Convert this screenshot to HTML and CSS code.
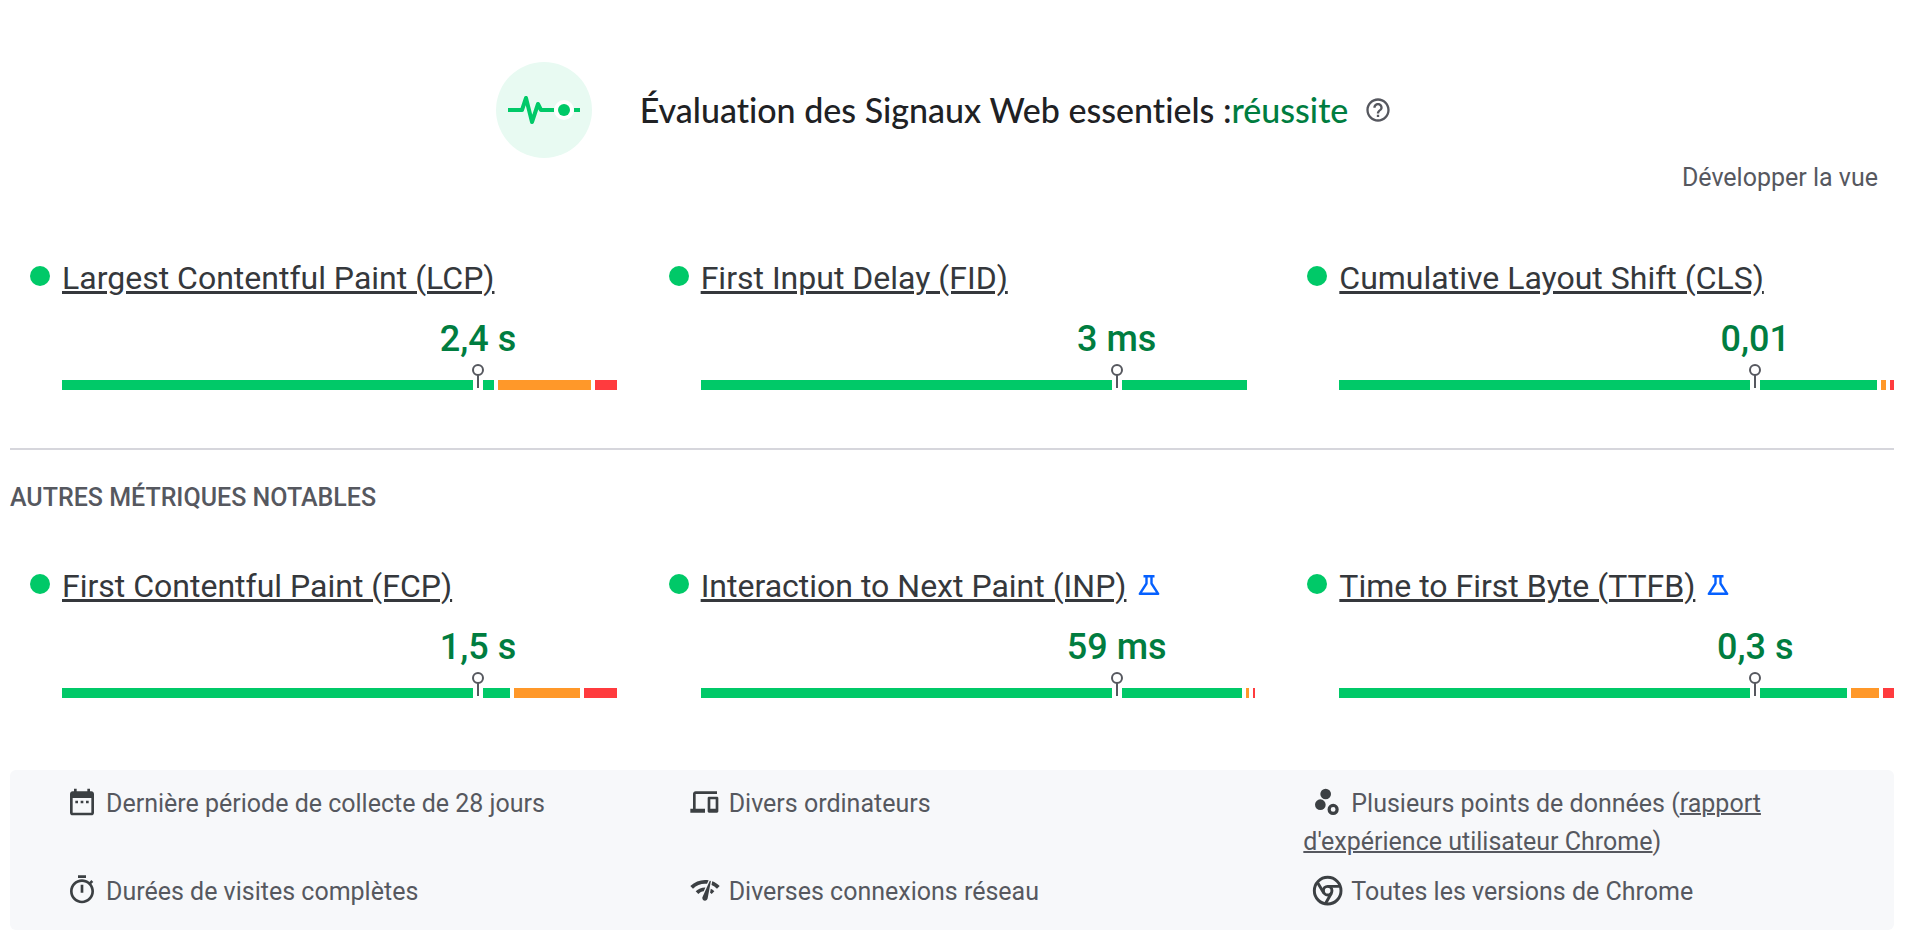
FILE: index.html
```html
<!DOCTYPE html>
<html lang="fr">
<head>
<meta charset="utf-8">
<meta name="viewport" content="width=device-width, initial-scale=1">
<title>Signaux Web essentiels</title>
<link rel="stylesheet" href="styles.css">
</head>
<body>
<main class="report">
  <header class="assessment">
    <svg class="assessment-icon" viewBox="0 0 96 96" aria-hidden="true">
      <circle cx="48" cy="48" r="48" fill="#e8faf2"/>
      <path d="M12 48h14l4-12 6 24 6-18 3 6h13" fill="none" stroke="#00c968" stroke-width="4" stroke-linejoin="round"/>
      <circle cx="68" cy="48" r="10" fill="#fff"/>
      <circle cx="68" cy="48" r="6" fill="#00c968"/>
      <path d="M78 48h6" stroke="#00c968" stroke-width="4"/>
    </svg>
    <h1 class="assessment-title">Évaluation des Signaux Web essentiels :<span class="passed">réussite</span></h1>
    <button class="help" type="button" aria-label="Aide">
      <svg viewBox="0 0 24 24" aria-hidden="true"><path fill="currentColor" d="M11 18h2v-2h-2v2zm1-16C6.480 2 2 6.480 2 12s4.480 10 10 10 10-4.480 10-10S17.520 2 12 2zm0 18c-4.410 0-8-3.590-8-8s3.590-8 8-8 8 3.590 8 8-3.590 8-8 8zm0-14c-2.210 0-4 1.790-4 4h2c0-1.100.9-2 2-2s2 .9 2 2c0 2-3 1.750-3 5h2c0-2.250 3-2.500 3-5 0-2.210-1.790-4-4-4z"/></svg>
    </button>
  </header>

  <div class="toolbar"><button class="expand" type="button">Développer la vue</button></div>

  <section class="metrics">
    <article class="metric">
      <h2 class="metric-title"><span class="dot"></span><a href="#lcp">Largest Contentful Paint (LCP)</a></h2>
      <div class="metric-body">
        <p class="value">2,4 s</p>
        <div class="bar"><span class="good" style="flex-grow:79"></span><span class="average" style="flex-grow:17"></span><span class="poor" style="flex-grow:4"></span><i class="pin"></i></div>
      </div>
    </article>
    <article class="metric">
      <h2 class="metric-title"><span class="dot"></span><a href="#fid">First Input Delay (FID)</a></h2>
      <div class="metric-body">
        <p class="value">3 ms</p>
        <div class="bar"><span class="good" style="flex-grow:100"></span><span class="average" style="flex-grow:0"></span><span class="poor" style="flex-grow:0"></span><i class="pin"></i></div>
      </div>
    </article>
    <article class="metric">
      <h2 class="metric-title"><span class="dot"></span><a href="#cls">Cumulative Layout Shift (CLS)</a></h2>
      <div class="metric-body">
        <p class="value">0,01</p>
        <div class="bar"><span class="good" style="flex-grow:984"></span><span class="average" style="flex-grow:9"></span><span class="poor" style="flex-grow:7"></span><i class="pin"></i></div>
      </div>
    </article>
  </section>

  <h2 class="section-title">AUTRES MÉTRIQUES NOTABLES</h2>

  <section class="metrics">
    <article class="metric">
      <h2 class="metric-title"><span class="dot"></span><a href="#fcp">First Contentful Paint (FCP)</a></h2>
      <div class="metric-body">
        <p class="value">1,5 s</p>
        <div class="bar"><span class="good" style="flex-grow:82"></span><span class="average" style="flex-grow:12"></span><span class="poor" style="flex-grow:6"></span><i class="pin"></i></div>
      </div>
    </article>
    <article class="metric">
      <h2 class="metric-title"><span class="dot"></span><a href="#inp">Interaction to Next Paint (INP)</a>
        <svg class="flask" viewBox="0 0 22 20" aria-hidden="true"><path d="M5.500 1.200h11M8.500 1v7.500L1.800 18.800h18.400L13.500 8.500V1" fill="none" stroke="#0560ff" stroke-width="2.400" stroke-linejoin="round"/></svg></h2>
      <div class="metric-body">
        <p class="value">59 ms</p>
        <div class="bar"><span class="good" style="flex-grow:198"></span><span class="average" style="flex-grow:1"></span><span class="poor" style="flex-grow:1"></span><i class="pin"></i></div>
      </div>
    </article>
    <article class="metric">
      <h2 class="metric-title"><span class="dot"></span><a href="#ttfb">Time to First Byte (TTFB)</a>
        <svg class="flask" viewBox="0 0 22 20" aria-hidden="true"><path d="M5.500 1.200h11M8.500 1v7.500L1.800 18.800h18.400L13.500 8.500V1" fill="none" stroke="#0560ff" stroke-width="2.400" stroke-linejoin="round"/></svg></h2>
      <div class="metric-body">
        <p class="value">0,3 s</p>
        <div class="bar"><span class="good" style="flex-grow:92"></span><span class="average" style="flex-grow:5"></span><span class="poor" style="flex-grow:2"></span><i class="pin"></i></div>
      </div>
    </article>
  </section>

  <ul class="details">
    <li><svg class="icon" viewBox="0 0 24 24" aria-hidden="true"><path d="M9 11H7v2h2v-2zm4 0h-2v2h2v-2zm4 0h-2v2h2v-2zm2-7h-1V2h-2v2H8V2H6v2H5c-1.110 0-1.990.9-1.990 2L3 20c0 1.100.89 2 2 2h14c1.100 0 2-.9 2-2V6c0-1.100-.9-2-2-2zm0 16H5V9h14v11z"/></svg>Dernière période de collecte de 28 jours</li>
    <li><svg class="icon" viewBox="0 0 24 24" aria-hidden="true"><path d="M5 6h16V4H5c-1.100 0-2 .9-2 2v11H1v3h11v-3H5V6zm16 2h-6c-.55 0-1 .45-1 1v10c0 .55.45 1 1 1h6c.55 0 1-.45 1-1V9c0-.55-.45-1-1-1zm-1 9h-4v-7h4v7z"/></svg>Divers ordinateurs</li>
    <li><svg class="icon" viewBox="0 0 24 24" aria-hidden="true"><circle cx="7" cy="14" r="4"/><circle cx="11" cy="6" r="4"/><circle cx="16.600" cy="17.600" r="3" fill="none" stroke="#3c4043" stroke-width="2.400"/></svg>Plusieurs points de données (<a href="#crux">rapport d'expérience utilisateur Chrome</a>)</li>
    <li><svg class="icon" viewBox="0 0 24 24" aria-hidden="true"><path d="M15 1H9v2h6V1zm-4 13h2V8h-2v6zm8.030-6.610l1.420-1.420c-.43-.51-.9-.99-1.410-1.410l-1.420 1.420C16.070 4.740 14.120 4 12 4c-4.970 0-9 4.030-9 9s4.020 9 9 9 9-4.030 9-9c0-2.120-.74-4.070-1.970-5.610zM12 20c-3.870 0-7-3.130-7-7s3.130-7 7-7 7 3.130 7 7-3.130 7-7 7z"/></svg>Durées de visites complètes</li>
    <li><svg class="icon" viewBox="0 0 24 24" aria-hidden="true"><path d="M15.900 5c-.17 0-.32.090-.41.230l-.07.150-5.180 11.650c-.16.290-.26.610-.26.960 0 1.110.9 2.010 2.010 2.010.96 0 1.770-.68 1.960-1.590l.010-.03L16.400 5.500c0-.28-.22-.5-.5-.5zM1 9l2 2c2.880-2.880 6.790-4.080 10.530-3.620l1.190-2.680C9.890 3.840 4.740 5.270 1 9zm20 2l2-2c-1.640-1.640-3.550-2.820-5.590-3.570l-.53 2.820c1.500.62 2.900 1.530 4.120 2.750zm-4 4l2-2c-.8-.8-1.700-1.420-2.660-1.890l-.55 2.920c.42.270.83.590 1.210.97zM5 13l2 2c1.130-1.130 2.560-1.790 4.030-2l1.280-2.880c-2.630-.08-5.300.87-7.310 2.880z"/></svg>Diverses connexions réseau</li>
    <li><svg class="icon" viewBox="0 0 24 24" aria-hidden="true"><g fill="none" stroke="#3c4043" stroke-width="2.200"><circle cx="12.500" cy="12.500" r="10"/><circle cx="12.500" cy="12.500" r="3.200"/><path d="M12.500 9.300h9M9.600 14.200L5 6.500M15.400 14.200L11 22"/></g></svg>Toutes les versions de Chrome</li>
  </ul>
</main>
</body>
</html>
```
FILE: styles.css
```css
*,
*::before,
*::after {
  box-sizing: border-box;
}

body {
  margin: 0;
  background: #fff;
  color: #56585f;
  font: 400 25px/38px Roboto, sans-serif;
}

h1,
h2,
p,
ul {
  margin: 0;
  padding: 0;
}

a {
  color: inherit;
}

button {
  border: 0;
  background: none;
  color: inherit;
  font: inherit;
}

.report {
  padding: 62px 12px 12px 10px;
}

.assessment {
  display: flex;
  align-items: center;
  justify-content: center;
}

.assessment-icon {
  width: 96px;
  height: 96px;
  margin-right: 48px;
}

.assessment-title {
  color: #202124;
  font: 500 34px/40px "Google Sans", Lato, sans-serif;
  font-variant-ligatures: none;
}

.passed {
  color: #007d40;
}

.help {
  display: flex;
  padding: 0 16px;
}

.help svg {
  width: 28px;
  height: 28px;
}

.toolbar {
  display: flex;
  justify-content: flex-end;
  padding-right: 16px;
}

.expand {
  padding: 0;
  line-height: 40px;
}

.metrics {
  display: grid;
  grid-template-columns: repeat(3, minmax(0, 1fr));
  gap: 32px;
  padding-top: 60px;
}

.metric {
  padding-left: 20px;
}

.metric-title {
  display: flex;
  align-items: center;
  gap: 12px;
  color: #35383c;
  font-size: 32px;
  font-weight: 400;
  line-height: 40px;
}

.metric-title a {
  text-decoration-thickness: 3px;
}

.dot {
  width: 20px;
  height: 20px;
  margin-bottom: 4px;
  border-radius: 50%;
  background: #00c968;
}

.flask {
  width: 22px;
  height: 20px;
  margin-bottom: 2px;
}

.metric-body {
  padding: 21px 0 0 32px;
}

.value {
  margin-left: 50%;
  color: #007d40;
  font-size: 36px;
  font-weight: 500;
  line-height: 40px;
  text-align: center;
}

.bar {
  position: relative;
  display: flex;
  gap: 4px;
  height: 10px;
  margin-top: 21px;
}

.good {
  background: #00c968;
}

.average {
  background: #ff9829;
}

.poor {
  background: #ff3b3e;
}

.pin {
  position: absolute;
  top: 0;
  left: 75%;
  width: 10px;
  height: 10px;
  margin-left: -5px;
  background: #fff;
}

.pin::before {
  content: "";
  position: absolute;
  top: -16px;
  left: -1px;
  width: 12px;
  height: 12px;
  border: 2px solid #56585f;
  border-radius: 50%;
}

.pin::after {
  content: "";
  position: absolute;
  top: -5px;
  left: 4px;
  width: 2px;
  height: 13px;
  background: #56585f;
}

.section-title {
  margin-top: 58px;
  padding-top: 30px;
  border-top: 2px solid #d6d6dc;
  font-size: 25px;
  font-weight: 500;
  line-height: 36px;
}

.section-title + .metrics {
  padding-top: 50px;
}

.details {
  display: grid;
  grid-template-columns: repeat(3, minmax(0, 1fr));
  gap: 12px 80px;
  margin-top: 72px;
  padding: 15px 48px 19px;
  border-radius: 6px;
  background: #f7f8fa;
  list-style: none;
}

.details a {
  text-decoration-thickness: 2px;
}

.icon {
  width: 32px;
  height: 32px;
  margin: 0 8px;
  fill: #3c4043;
  vertical-align: -6px;
}
```
